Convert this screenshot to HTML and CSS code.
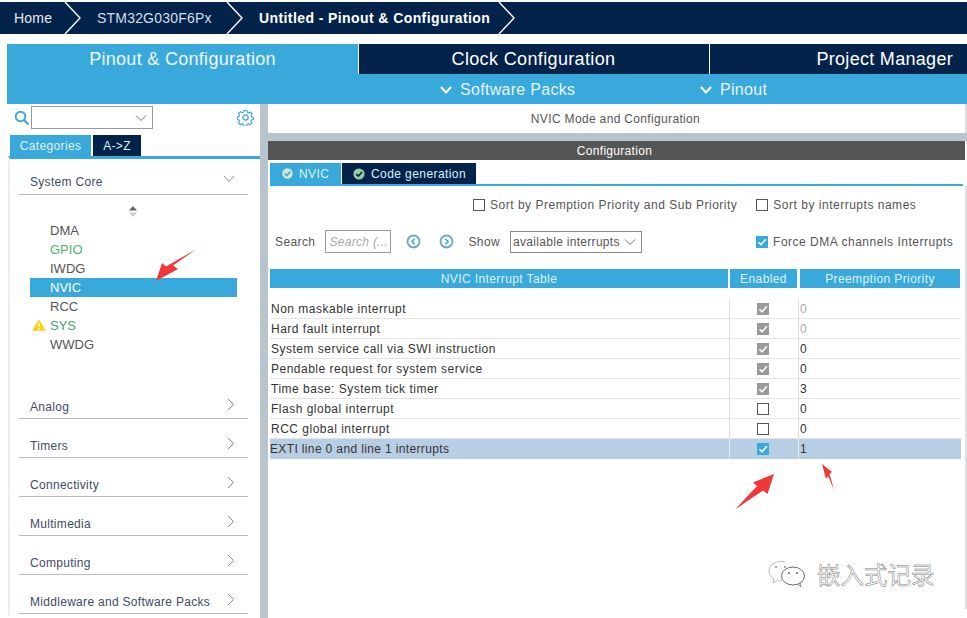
FILE: index.html
```html
<!DOCTYPE html>
<html lang="en">
<head>
<meta charset="utf-8">
<title>STM32CubeMX</title>
<link rel="stylesheet" href="styles.css">
</head>
<body>
<div class="app">
  <nav class="crumbs">
    <span class="crumb c1">Home</span>
    <svg class="chev" width="24" height="32" viewBox="0 0 24 32"><path d="M2 0 L17 16 L2 32" fill="none" stroke="#fff" stroke-width="1.4"/></svg>
    <span class="crumb c2">STM32G030F6Px</span>
    <svg class="chev" width="24" height="32" viewBox="0 0 24 32"><path d="M2 0 L17 16 L2 32" fill="none" stroke="#fff" stroke-width="1.4"/></svg>
    <span class="crumb c3">Untitled - Pinout &amp; Configuration</span>
    <svg class="chev" width="24" height="32" viewBox="0 0 24 32"><path d="M2 0 L17 16 L2 32" fill="none" stroke="#fff" stroke-width="1.4"/></svg>
  </nav>

  <div class="shell">
    <div class="maintabs">
      <div class="mt mt-a">Pinout &amp; Configuration</div>
      <div class="mt mt-b">Clock Configuration</div>
      <div class="mt mt-c">Project Manager</div>
    </div>
    <div class="subbar">
      <span class="sub s1"><svg width="14" height="10" viewBox="0 0 14 10"><path d="M2 2 L7 7.5 L12 2" fill="none" stroke="#fff" stroke-width="2"/></svg>Software Packs</span>
      <span class="sub s2"><svg width="14" height="10" viewBox="0 0 14 10"><path d="M2 2 L7 7.5 L12 2" fill="none" stroke="#fff" stroke-width="2"/></svg>Pinout</span>
    </div>

    <div class="work">
      <aside class="side">
        <div class="searchrow">
          <svg class="mag" width="16" height="16" viewBox="0 0 16 16"><circle cx="6.5" cy="6.5" r="4.8" fill="none" stroke="#39a9dc" stroke-width="2"/><path d="M10 10 L14.5 14.5" stroke="#39a9dc" stroke-width="2.2"/></svg>
          <div class="sidesel"><svg width="12" height="8" viewBox="0 0 12 8"><path d="M1 1.5 L6 6.5 L11 1.5" fill="none" stroke="#777" stroke-width="1"/></svg></div>
          <svg class="gear" width="17" height="17" viewBox="0 0 17 17"><path d="M7 1 h3 l.4 2 1.5.7 1.8-1.1 2 2-1.1 1.8.7 1.6 2 .4 v0 h-.3 v2.2 l-2 .4-.7 1.5 1.1 1.8-2 2-1.8-1.1-1.5.7-.4 2 h-3 l-.4-2-1.5-.7-1.8 1.1-2-2 1.1-1.8-.7-1.5-2-.4 v-2.6 l2-.4.7-1.6-1.1-1.8 2-2 1.8 1.1 1.5-.7z" transform="translate(.6 .6) scale(.93)" fill="none" stroke="#39a9dc" stroke-width="1.2"/><circle cx="8.5" cy="8.5" r="2.7" fill="none" stroke="#39a9dc" stroke-width="1.2"/></svg>
        </div>
        <div class="sidetabs">
          <span class="stab on">Categories</span>
          <span class="stab off">A-&gt;Z</span>
        </div>
        <div class="tree">
          <div class="cat first"><span>System Core</span><svg width="12" height="8" viewBox="0 0 12 8"><path d="M1 1 L6 6.5 L11 1" fill="none" stroke="#888" stroke-width="1"/></svg></div>
          <div class="sorter"><svg width="10" height="13" viewBox="0 0 10 13"><path d="M5 1 L9 5.5 H1z" fill="#666"/><path d="M5 12 L9 7.5 H1z" fill="#ccc"/></svg></div>
          <ul class="items">
            <li class="it">DMA</li>
            <li class="it green">GPIO</li>
            <li class="it">IWDG</li>
            <li class="it sel">NVIC</li>
            <li class="it">RCC</li>
            <li class="it green2"><svg class="warn" width="14" height="12" viewBox="0 0 14 12"><path d="M7 0.3 L13.800 11.800 H0.200z" fill="#fcd20f"/><path d="M7 4 V8" stroke="#fff" stroke-width="1.4"/><circle cx="7" cy="9.800" r=".8" fill="#fff"/></svg>SYS</li>
            <li class="it">WWDG</li>
          </ul>
          <div class="cats">
            <div class="cat"><span>Analog</span><svg width="8" height="13" viewBox="0 0 8 13"><path d="M1 1 L6.500 6.500 L1 12" fill="none" stroke="#888" stroke-width="1"/></svg></div>
            <div class="cat"><span>Timers</span><svg width="8" height="13" viewBox="0 0 8 13"><path d="M1 1 L6.500 6.500 L1 12" fill="none" stroke="#888" stroke-width="1"/></svg></div>
            <div class="cat"><span>Connectivity</span><svg width="8" height="13" viewBox="0 0 8 13"><path d="M1 1 L6.500 6.500 L1 12" fill="none" stroke="#888" stroke-width="1"/></svg></div>
            <div class="cat"><span>Multimedia</span><svg width="8" height="13" viewBox="0 0 8 13"><path d="M1 1 L6.500 6.500 L1 12" fill="none" stroke="#888" stroke-width="1"/></svg></div>
            <div class="cat"><span>Computing</span><svg width="8" height="13" viewBox="0 0 8 13"><path d="M1 1 L6.500 6.500 L1 12" fill="none" stroke="#888" stroke-width="1"/></svg></div>
            <div class="cat"><span>Middleware and Software Packs</span><svg width="8" height="13" viewBox="0 0 8 13"><path d="M1 1 L6.500 6.500 L1 12" fill="none" stroke="#888" stroke-width="1"/></svg></div>
          </div>
        </div>
      </aside>

      <div class="split"></div>

      <section class="panel">
        <div class="ptitle">NVIC Mode and Configuration</div>
        <div class="band"></div>
        <div class="cfgbar">Configuration</div>
        <div class="cfgtabs">
          <span class="ctab on"><svg width="11" height="11" viewBox="0 0 11 11"><circle cx="5.500" cy="5.500" r="5.200" fill="#cfe8d2"/><path d="M2.800 5.600 L4.800 7.600 L8.200 3.800" fill="none" stroke="#39a9dc" stroke-width="1.6"/></svg>NVIC</span>
          <span class="ctab off"><svg width="12" height="12" viewBox="0 0 12 12"><circle cx="6" cy="6" r="5.600" fill="#8fd0a4"/><path d="M3.200 6 L5.300 8.100 L8.900 4.100" fill="none" stroke="#03234b" stroke-width="1.6"/></svg>Code generation</span>
        </div>
        <div class="tools">
          <div class="toolrow r1">
            <label class="chk"><i class="box"></i>Sort by Premption Priority and Sub Priority</label>
            <label class="chk"><i class="box"></i>Sort by interrupts names</label>
          </div>
          <div class="toolrow r2">
            <span class="lbl">Search</span>
            <span class="srch">Search (...</span>
            <svg class="nav n1" width="15" height="15" viewBox="0 0 15 15"><circle cx="7.500" cy="7.500" r="6" fill="none" stroke="#6aa9c6" stroke-width="1.8"/><path d="M8.700 4.800 L6 7.500 L8.700 10.200" fill="none" stroke="#39a9dc" stroke-width="1.6"/></svg>
            <svg class="nav n2" width="15" height="15" viewBox="0 0 15 15"><circle cx="7.500" cy="7.500" r="6" fill="none" stroke="#6aa9c6" stroke-width="1.8"/><path d="M6.300 4.800 L9 7.500 L6.300 10.200" fill="none" stroke="#39a9dc" stroke-width="1.6"/></svg>
            <span class="lbl show">Show</span>
            <span class="showsel">available interrupts<svg width="12" height="8" viewBox="0 0 12 8"><path d="M1 1.500 L6 6.500 L11 1.500" fill="none" stroke="#777" stroke-width="1"/></svg></span>
            <label class="chk force"><i class="box on"><svg width="12" height="12" viewBox="0 0 12 12"><path d="M2.500 6.200 L5 8.800 L9.800 3.200" fill="none" stroke="#fff" stroke-width="1.6"/></svg></i>Force DMA channels Interrupts</label>
          </div>
        </div>
        <div class="table">
          <div class="thead">
            <div class="th">NVIC Interrupt Table</div>
            <div class="th">Enabled</div>
            <div class="th">Preemption Priority</div>
          </div>
          <div class="tbody">
            <div class="tr"><div class="td name">Non maskable interrupt</div><div class="td mid"><i class="box gray"><svg width="12" height="12" viewBox="0 0 12 12"><path d="M2.500 6.200 L5 8.800 L9.800 3.200" fill="none" stroke="#fff" stroke-width="1.5"/></svg></i></div><div class="td val dim">0</div></div>
            <div class="tr"><div class="td name">Hard fault interrupt</div><div class="td mid"><i class="box gray"><svg width="12" height="12" viewBox="0 0 12 12"><path d="M2.500 6.200 L5 8.800 L9.800 3.200" fill="none" stroke="#fff" stroke-width="1.5"/></svg></i></div><div class="td val dim">0</div></div>
            <div class="tr"><div class="td name">System service call via SWI instruction</div><div class="td mid"><i class="box gray"><svg width="12" height="12" viewBox="0 0 12 12"><path d="M2.500 6.200 L5 8.800 L9.800 3.200" fill="none" stroke="#fff" stroke-width="1.5"/></svg></i></div><div class="td val">0</div></div>
            <div class="tr"><div class="td name">Pendable request for system service</div><div class="td mid"><i class="box gray"><svg width="12" height="12" viewBox="0 0 12 12"><path d="M2.500 6.200 L5 8.800 L9.800 3.200" fill="none" stroke="#fff" stroke-width="1.5"/></svg></i></div><div class="td val">0</div></div>
            <div class="tr"><div class="td name">Time base: System tick timer</div><div class="td mid"><i class="box gray"><svg width="12" height="12" viewBox="0 0 12 12"><path d="M2.500 6.200 L5 8.800 L9.800 3.200" fill="none" stroke="#fff" stroke-width="1.5"/></svg></i></div><div class="td val">3</div></div>
            <div class="tr"><div class="td name">Flash global interrupt</div><div class="td mid"><i class="box"></i></div><div class="td val">0</div></div>
            <div class="tr"><div class="td name">RCC global interrupt</div><div class="td mid"><i class="box"></i></div><div class="td val">0</div></div>
            <div class="tr picked"><div class="td name">EXTI line 0 and line 1 interrupts</div><div class="td mid"><i class="box on"><svg width="12" height="12" viewBox="0 0 12 12"><path d="M2.500 6.200 L5 8.800 L9.800 3.200" fill="none" stroke="#fff" stroke-width="1.6"/></svg></i></div><div class="td val">1</div></div>
          </div>
        </div>
      </section>
    </div>
  </div>

  <svg class="arrow a1" width="44" height="34" viewBox="0 0 44 34"><path d="M41.500 1 L18 17.500 L23 21 L1 33 L7 15 L11 18.500z" fill="#f0373a"/></svg>
  <svg class="arrow a2" width="42" height="38" viewBox="0 0 42 38"><path d="M0 37.500 L22 14 L18 10.500 L39 2 L32.500 22 L28 18.500z" fill="#f0373a"/></svg>
  <svg class="arrow a3" width="14" height="28" viewBox="0 0 14 28"><path d="M13 27 L7 13 L5 16 L1 1 L11 9 L8.500 11z" fill="#f0373a"/></svg>

  <div class="mark">
    <svg width="40" height="30" viewBox="0 0 40 30"><path d="M18 3 C10 1 2 5 2 12 C2 16 4 18 7 20 L6 24 L11 21.500 C12 22 13 22 15 22" fill="none" stroke="#bbb" stroke-width="1"/><ellipse cx="26" cy="17" rx="11.500" ry="9" fill="none" stroke="#666" stroke-width="1"/><path d="M31 25 L34 28 L33 24" fill="none" stroke="#888"/><circle cx="22" cy="14" r="1" fill="#666"/><circle cx="30" cy="14" r="1" fill="#666"/><circle cx="9" cy="8" r="1" fill="#888"/><circle cx="18" cy="8" r="1" fill="#888"/></svg>
    <span>嵌入式记录</span>
  </div>
</div>
</body>
</html>
```
FILE: styles.css
```css
* { box-sizing: border-box; }
html, body { margin: 0; padding: 0; background: #fff; }
body { font-family: "Liberation Sans", Arial, sans-serif; color: #4a4a4a; }
.app { position: relative; width: 967px; height: 618px; overflow: hidden; padding-top: 2px; }

.crumbs { display: flex; align-items: center; height: 32px; background: #03234b; color: #fff; font-size: 14px; }
.crumb { letter-spacing: .2px; white-space: nowrap; }
.c1 { margin-left: 14px; width: 49px; color: #e6ebf0; }
.c2 { margin-left: 10px; width: 128px; color: #d6dde5; }
.c3 { margin-left: 10px; width: 238px; font-weight: 700; letter-spacing: .41px; }
.chev { flex: none; display: block; }

.shell { margin: 10px 0 0 7px; }
.maintabs { display: flex; height: 30px; color: #fff; font-size: 18px; letter-spacing: .3px; }
.mt { display: flex; align-items: center; justify-content: center; background: #03234b; }
.mt-a { width: 351px; background: #39a9dc; color: #eef8fd; }
.mt-b { width: 350px; margin-left: 1px; padding-right: 1px; letter-spacing: .36px; }
.mt-c { flex: 1; margin-left: 1px; justify-content: flex-end; padding-right: 14px; }
.subbar { position: relative; display: flex; height: 30px; padding-top: 1px; background: #39a9dc; color: #e6f4fb; font-size: 16px; letter-spacing: .3px; align-items: center; }
.sub { display: flex; align-items: center; gap: 7px; }
.s1 { margin-left: 432px; width: 260px; }
.s2 { margin-left: 0; }

.work { display: flex; height: 514px; }
.side { width: 253px; flex: none; padding-top: 2px; }
.searchrow { display: flex; align-items: center; height: 23px; padding-left: 7px; }
.mag { flex: none; }
.sidesel { width: 122px; height: 23px; margin-left: 1px; border: 1px solid #9a9a9a; display: flex; align-items: center; justify-content: flex-end; padding-right: 5px; }
.gear { margin-left: 84px; flex: none; }
.sidetabs { display: flex; margin: 6px 0 0 3px; gap: 2px; height: 21px; font-size: 12px; letter-spacing: .35px; }
.stab { display: flex; align-items: center; justify-content: center; color: #dff1fa; }
.stab.on { width: 81px; background: #39a9dc; }
.stab.off { width: 48px; background: #03234b; }
.tree { border-top: 3px solid #39a9dc; border-left: 2px solid #eceff1; margin-left: 1px; height: 459px; padding: 0 12px 0 9px; }
.cat { display: flex; justify-content: space-between; align-items: center; height: 39px; border-bottom: 1px solid #b6bcc2; padding: 16px 13px 0 11px; font-size: 12px; letter-spacing: .3px; color: #3f4a66; white-space: nowrap; }
.cat svg { margin-top: -6px; }
.cat.first { height: 36px; padding-top: 10px; }
.sorter { display: flex; justify-content: center; height: 14px; margin-top: 10px; padding-right: 1px; }
.items { list-style: none; margin: 2px 0 0; padding: 0; }
.it { position: relative; height: 19px; line-height: 19px; padding-left: 20px; margin: 0 11px; font-size: 13px; color: #555; }
.green { color: #4cb56c; }
.green2 { color: #4aa370; }
.sel { background: #39a9dc; color: #fff; }
.warn { position: absolute; left: 2px; top: 3px; }
.cats { margin-top: 26px; }

.split { width: 8px; flex: none; background: #b8c4cc; }
.panel { flex: 1; min-width: 0; }
.ptitle { height: 29px; display: flex; align-items: center; justify-content: center; font-size: 12px; letter-spacing: .34px; color: #555; padding-right: 2px; border-right: 2px solid #ddd; }
.band { height: 8px; background: #b8c4cc; }
.cfgbar { height: 19px; margin-right: 2px; padding-right: 4px; background: #555; color: #fff; font-size: 12px; letter-spacing: .3px; display: flex; align-items: center; justify-content: center; }
.cfgtabs { display: flex; height: 26px; margin: 0 4px 0 2px; padding-top: 3px; border-bottom: 2px solid #39a9dc; font-size: 12px; letter-spacing: .42px; color: #dff1fa; }
.ctab { display: flex; align-items: center; height: 21px; gap: 6px; white-space: nowrap; }
.ctab.on { width: 71px; background: #39a9dc; padding-left: 12px; margin-right: 1px; }
.ctab.off { width: 134px; background: #03234b; padding-left: 11px; }
.tools { font-size: 12px; letter-spacing: .3px; color: #555; border-right: 2px solid #dde1e4; height: 83px; padding-top: 10px; }
.toolrow { display: flex; align-items: center; position: relative; }
.r1 { height: 17px; padding-left: 205px; gap: 19px; }
.r2 { height: 23px; margin-top: 17px; padding-left: 7px; }
.chk { display: flex; align-items: center; gap: 5px; white-space: nowrap; letter-spacing: .51px; }
.box { display: inline-flex; width: 12px; height: 12px; border: 1px solid #555; background: #fff; flex: none; }
.box.on { background: #39a9dc; border: 0; }
.box.gray { background: #999; border: 0; }
.lbl { color: #555; letter-spacing: .4px; }
.srch { width: 66px; height: 23px; margin-left: 10px; border: 1px solid #999; padding: 0 3px; display: flex; align-items: center; font-style: italic; color: #aaa; white-space: nowrap; overflow: hidden; }
.nav.n1 { margin-left: 15px; }
.nav.n2 { margin-left: 18px; }
.show { margin-left: 14px; }
.showsel { display: flex; align-items: center; justify-content: space-between; width: 132px; height: 22px; margin-left: 10px; border: 1px solid #888; padding: 0 5px 0 2px; white-space: nowrap; }
.force { margin-left: 114px; }
.table { padding: 0 3px 0 2px; font-size: 12px; border-right: 2px solid #dde1e4; height: 340px; }
.thead { display: grid; grid-template-columns: 458px 67px 161px; column-gap: 2px; color: #dff1fa; letter-spacing: .4px; }
.th { height: 19px; background: #39a9dc; display: flex; align-items: center; justify-content: center; }
.thead .th:nth-child(3) { margin-left: 1px; }
.tbody { padding-top: 11px; }
.tr { display: grid; grid-template-columns: 459px 70px 1fr; height: 20px; border-bottom: 1px solid #e4e4e4; margin-right: 1px; color: #333; letter-spacing: .5px; }
.td { display: flex; align-items: center; }
.name { padding-left: 1px; white-space: nowrap; }
.mid { justify-content: center; border-left: 1px solid #dcdcdc; border-right: 1px solid #dcdcdc; padding-right: 3px; }
.val { padding-left: 1px; }
.dim { color: #aaa; }
.picked { background: #b8cee4; border-bottom: 0; }
.picked .name { padding-left: 0; letter-spacing: .36px; }
.picked .mid { border-color: #e6eef6; }

.arrow { position: absolute; }
.a1 { left: 155px; top: 248px; }
.a2 { left: 735px; top: 472px; }
.a3 { left: 821px; top: 463px; }
.mark { position: absolute; left: 767px; top: 557px; display: flex; align-items: center; gap: 8px; }
.mark span { font-family: "Noto Sans CJK SC", sans-serif; font-size: 23.5px; color: #fff; -webkit-text-stroke: .5px #777; white-space: nowrap; margin-left: 2px; }
```
